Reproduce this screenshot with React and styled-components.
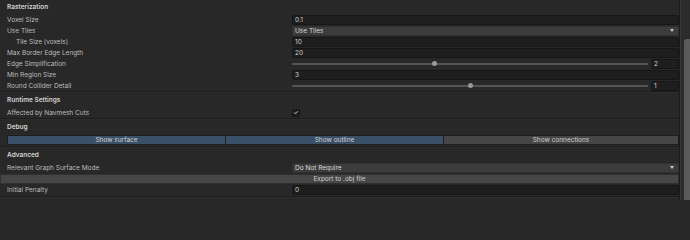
import React from "react";
import styled, { createGlobalStyle } from "styled-components";

const GlobalStyle = createGlobalStyle`
  html, body {
    margin: 0;
    padding: 0;
    background: #282828;
  }
  body {
    font-family: Inter, "Noto Sans", sans-serif;
    -webkit-font-smoothing: antialiased;
  }
`;

const Frame = styled.div`
  display: flex;
  width: 690px;
  height: 200px;
  overflow: hidden;
  background: #282828;
`;

const Inspector = styled.div`
  display: flex;
  flex-direction: column;
  width: 679px;
  border-right: 1px solid #1b1b1b;
  box-sizing: content-box;
`;

const ScrollTrack = styled.div`
  flex: 1;
  display: flex;
  justify-content: flex-end;
  padding-top: 39px;
  background: #2b2b2b;
  border-left: 1px solid #3a3a3a;
`;

const ScrollThumb = styled.div`
  width: 6px;
  height: 170px;
  border-radius: 3px 0 0 0;
  background: #5a5a5a;
`;

const Header = styled.div`
  display: flex;
  align-items: center;
  height: 14px;
  padding: 0 0 1px 7px;
  box-sizing: border-box;
  font-size: 6.5px;
  font-weight: 600;
  color: #d2d2d2;
`;

const Separator = styled.div`
  height: 1px;
  margin-top: ${({ $gap }) => $gap || 0}px;
  background: #1d1d1d;
  border-bottom: 1px solid #2d2d2d;
`;

const Row = styled.div`
  display: flex;
  align-items: center;
  height: 11px;
  padding-left: ${({ $indent }) => ($indent ? 16 : 7)}px;
`;

const Label = styled.div`
  width: ${({ $indent }) => ($indent ? 276 : 285)}px;
  flex-shrink: 0;
  font-size: 6.5px;
  color: #bdbdbd;
  white-space: nowrap;
`;

const Field = styled.div`
  display: flex;
  align-items: center;
  flex: ${({ $w }) => ($w ? "none" : 1)};
  width: ${({ $w }) => ($w ? `${$w}px` : "auto")};
  height: 10px;
  padding-left: 2px;
  box-sizing: border-box;
  background: #1e1e1e;
  border: 1px solid #161616;
  border-radius: 2px;
  font-size: 6.5px;
  color: #d2d2d2;
`;

const Dropdown = styled.div`
  display: flex;
  align-items: center;
  justify-content: space-between;
  flex: 1;
  height: 10px;
  padding: 0 4px 0 2px;
  box-sizing: border-box;
  background: #3c3c3c;
  border: 1px solid #303030;
  border-radius: 2px;
  font-size: 6.5px;
  color: #dadada;
`;

const Arrow = styled.span`
  width: 0;
  height: 0;
  border-left: 2.5px solid transparent;
  border-right: 2.5px solid transparent;
  border-top: 3px solid #c8c8c8;
`;

const Slider = styled.div`
  display: flex;
  align-items: center;
  flex: 1;
  gap: 3px;
`;

const Track = styled.div`
  position: relative;
  flex: 1;
  height: 2px;
  background: #555555;
  border-radius: 1px;
`;

const Knob = styled.div`
  position: absolute;
  top: -2px;
  width: 5px;
  height: 5px;
  margin-left: -2.5px;
  border-radius: 50%;
  background: #999999;
`;

const Checkbox = styled.div`
  display: flex;
  align-items: center;
  justify-content: center;
  width: 8px;
  height: 8px;
  box-sizing: border-box;
  background: #1e1e1e;
  border: 1px solid #161616;
  border-radius: 2px;
  color: #e0e0e0;
  font-size: 6px;
  line-height: 1;
`;

const ButtonBar = styled.div`
  display: flex;
  height: 10px;
  margin: 1px 0 1px 7px;
`;

const ToggleButton = styled.div`
  flex: ${({ $w }) => ($w ? "none" : 1)};
  width: ${({ $w }) => ($w ? `${$w}px` : "auto")};
  box-sizing: border-box;
  display: flex;
  align-items: center;
  justify-content: center;
  border: 1px solid #1e1e1e;
  border-left-width: ${({ $first }) => ($first ? 1 : 0)}px;
  background: ${({ $active }) => ($active ? "#3a5068" : "#464646")};
  font-size: 6.5px;
  color: #d0d0d0;
`;

const WideButton = styled.div`
  display: flex;
  align-items: center;
  justify-content: center;
  height: 10px;
  margin: 1px 0 0;
  background: #464646;
  border: 1px solid #303030;
  box-sizing: border-box;
  font-size: 6.5px;
  color: #d0d0d0;
`;

const TextRow = ({ label, value, indent }) => (
  <Row $indent={indent}>
    <Label $indent={indent}>{label}</Label>
    <Field>{value}</Field>
  </Row>
);

const SelectRow = ({ label, value }) => (
  <Row>
    <Label>{label}</Label>
    <Dropdown>
      {value}
      <Arrow />
    </Dropdown>
  </Row>
);

const SliderRow = ({ label, value, pos }) => (
  <Row>
    <Label>{label}</Label>
    <Slider>
      <Track>
        <Knob style={{ left: `${pos * 100}%` }} />
      </Track>
      <Field $w={28}>{value}</Field>
    </Slider>
  </Row>
);

export default function App() {
  return (
    <>
      <GlobalStyle />
      <Frame>
        <Inspector>
          <Header>Rasterization</Header>
          <TextRow label="Voxel Size" value="0.1" />
          <SelectRow label="Use Tiles" value="Use Tiles" />
          <TextRow label="Tile Size (voxels)" value="10" indent />
          <TextRow label="Max Border Edge Length" value="20" />
          <SliderRow label="Edge Simplification" value="2" pos={0.4} />
          <TextRow label="Min Region Size" value="3" />
          <SliderRow label="Round Collider Detail" value="1" pos={0.5} />
          <Separator />

          <Header>Runtime Settings</Header>
          <Row>
            <Label>Affected by Navmesh Cuts</Label>
            <Checkbox>✓</Checkbox>
          </Row>
          <Separator />

          <Header>Debug</Header>
          <ButtonBar>
            <ToggleButton $active $first $w={219}>Show surface</ToggleButton>
            <ToggleButton $active $w={218}>Show outline</ToggleButton>
            <ToggleButton>Show connections</ToggleButton>
          </ButtonBar>
          <Separator />

          <Header>Advanced</Header>
          <SelectRow label="Relevant Graph Surface Mode" value="Do Not Require" />
          <WideButton>Export to .obj file</WideButton>
          <TextRow label="Initial Penalty" value="0" />
          <Separator $gap={1} />
        </Inspector>
        <ScrollTrack>
          <ScrollThumb />
        </ScrollTrack>
      </Frame>
    </>
  );
}
